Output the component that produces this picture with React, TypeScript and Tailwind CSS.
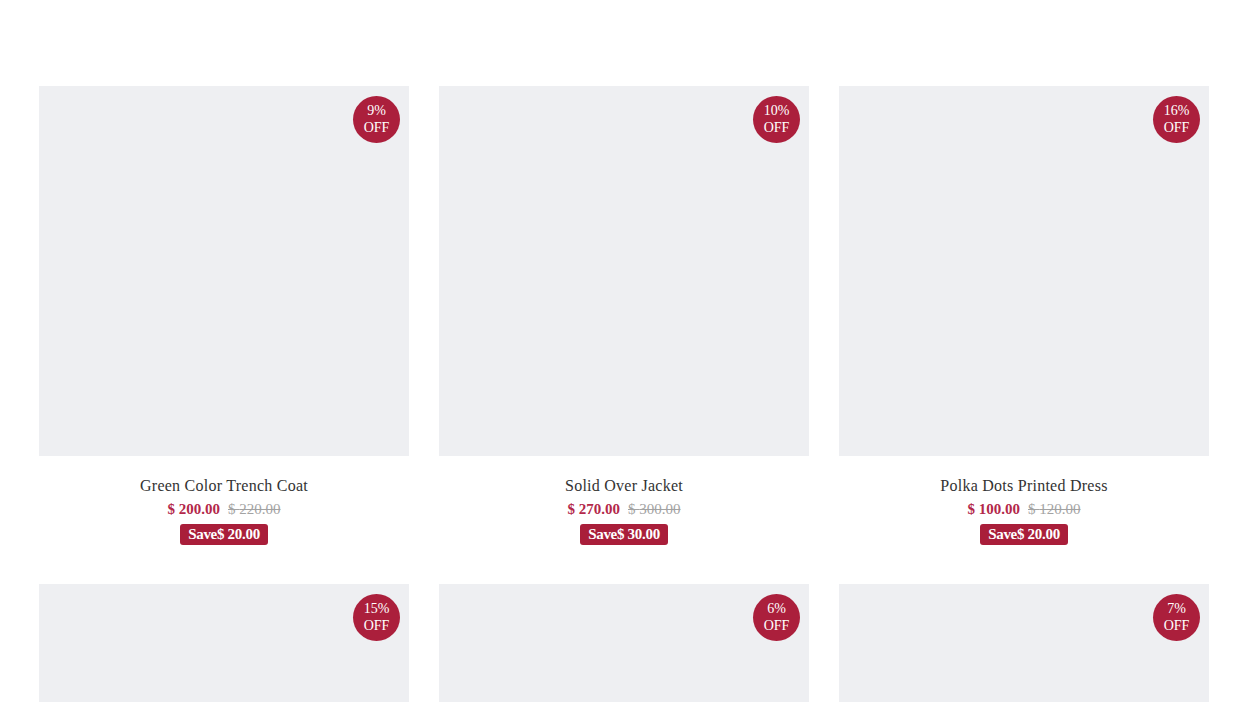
import React from "react";

const items = [
  { name: "Green Color Trench Coat", price: "200.00", old: "220.00", save: "20.00", off: "9%" },
  { name: "Solid Over Jacket", price: "270.00", old: "300.00", save: "30.00", off: "10%" },
  { name: "Polka Dots Printed Dress", price: "100.00", old: "120.00", save: "20.00", off: "16%" },
  { name: "Item Four", price: "85.00", old: "100.00", save: "15.00", off: "15%" },
  { name: "Item Five", price: "94.00", old: "100.00", save: "6.00", off: "6%" },
  { name: "Item Six", price: "93.00", old: "100.00", save: "7.00", off: "7%" },
];

export default function App() {
  return (
    <div className="w-[1248px] h-[702px] overflow-hidden bg-white" style={{ fontFamily: '"Liberation Serif", "DejaVu Serif", serif' }}>
      <div className="mx-auto w-[1170px] pt-[86px] grid grid-cols-3 gap-x-[30px] gap-y-[39px]">
        {items.map((it, i) => (
          <div key={i} className="flex flex-col items-center">
            <div className="relative w-[370px] h-[370px] bg-[#eeeff2]">
              <div className="absolute top-[10px] right-[9px] w-[47px] h-[47px] rounded-full bg-[#ab1f3c] text-white text-[14px] leading-[17px] flex flex-col items-center justify-center pb-[2px]">
                <span>{it.off}</span>
                <span>OFF</span>
              </div>
            </div>
            <div className="mt-[21px] text-[16px] leading-[18px] text-[#333] tracking-[0.25px]">{it.name}</div>
            <div className="mt-[6px] flex items-center gap-[8px] text-[15px] leading-[16px]">
              <span className="font-bold text-[#b3284a]">$ {it.price}</span>
              <span className="text-[#a3a3a3] line-through">$ {it.old}</span>
            </div>
            <div className="mt-[7px] bg-[#a91e3a] text-white font-bold text-[15px] leading-[17px] px-[8px] py-[2px] rounded-[3px] tracking-[-0.3px]">
              Save$ {it.save}
            </div>
          </div>
        ))}
      </div>
    </div>
  );
}
